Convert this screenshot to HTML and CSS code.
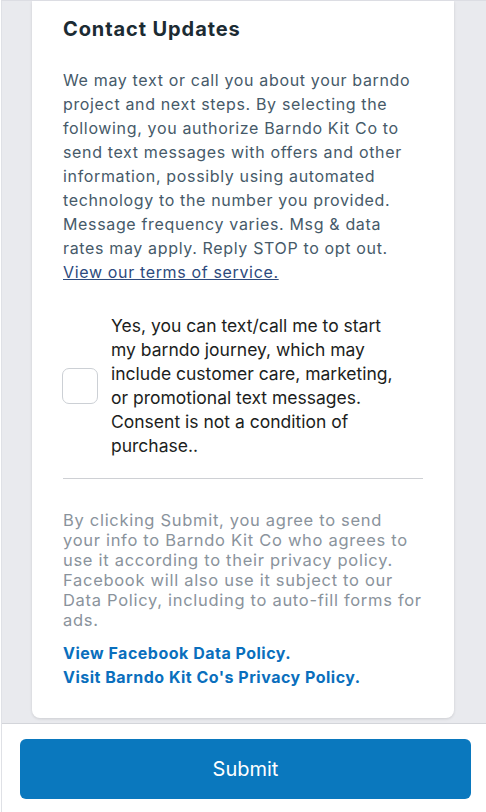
FILE: index.html
```html
<!DOCTYPE html>
<html lang="en">
<head>
<meta charset="utf-8">
<title>Contact Updates</title>
<link rel="stylesheet" href="styles.css">
</head>
<body>
<div class="page">
  <main class="scroll">
    <section class="card">
      <h2 class="title">Contact Updates</h2>
      <p class="intro">We may text or call you about your barndo project and next steps. By selecting the following, you authorize Barndo Kit Co to send text messages with offers and other information, possibly using automated technology to the number you provided. Message frequency varies. Msg &amp; data rates may apply. Reply STOP to opt out. <a class="terms" href="#">View our terms of service.</a></p>
      <label class="consent">
        <span class="box"></span>
        <span class="consent-text">Yes, you can text/call me to start my barndo journey, which may include customer care, marketing, or promotional text messages. Consent is not a condition of purchase..</span>
      </label>
      <hr class="divider">
      <p class="legal">By clicking Submit, you agree to send your info to Barndo Kit Co who agrees to use it according to their privacy policy. Facebook will also use it subject to our Data Policy, including to auto-fill forms for ads.</p>
      <div class="links">
        <a href="#">View Facebook Data Policy.</a>
        <a href="#">Visit Barndo Kit Co's Privacy Policy.</a>
      </div>
    </section>
  </main>
  <footer class="footer">
    <button class="submit" type="button">Submit</button>
  </footer>
</div>
</body>
</html>
```
FILE: styles.css
```css
html, body {
  margin: 0;
  padding: 0;
}
body {
  background: #ffffff;
  font-family: Inter, "Noto Sans", sans-serif;
  height: 812px;
  overflow: hidden;
}
.page {
  display: flex;
  flex-direction: column;
  height: 812px;
  margin-left: 1px;
  border-left: 1px solid #dfe1e6;
  border-top: 1px solid #dcdde3;
  box-sizing: border-box;
  background: #e9eaee;
}
.scroll {
  flex: 1;
  padding: 0 32px 0 30px;
  overflow: hidden;
}
.card {
  background: #ffffff;
  border-radius: 0 0 8px 8px;
  box-shadow: 0 1px 3px rgba(0, 0, 0, 0.12);
  padding: 15px 31px 0 31px;
  height: 717px;
  box-sizing: border-box;
}
.title {
  margin: 0;
  font-size: 20px;
  line-height: 26px;
  font-weight: 700;
  color: #1c2b33;
  letter-spacing: 0.9px;
}
.intro {
  margin: 26px 0 0;
  font-size: 16px;
  line-height: 24px;
  letter-spacing: 0.65px;
  color: #465a69;
}
.terms {
  text-decoration: underline;
  color: #2d4a7d;
}
.consent {
  display: flex;
  align-items: center;
  gap: 13px;
  margin-top: 30px;
}
.box {
  flex: none;
  width: 34px;
  height: 34px;
  margin-left: -1px;
  border: 1px solid #ccd0d5;
  border-radius: 7px;
  background: #fff;
}
.consent-text {
  padding-right: 18px;
  font-size: 17.5px;
  line-height: 24px;
  color: #1c1e21;
}
.divider {
  margin: 20px 0 0;
  border: 0;
  border-top: 1px solid #ced0d4;
}
.legal {
  margin: 31px 0 0;
  font-size: 16.5px;
  line-height: 20px;
  letter-spacing: 0.7px;
  color: #8a939c;
}
.links {
  display: flex;
  flex-direction: column;
  margin-top: 11px;
}
.links a {
  font-size: 16px;
  line-height: 24px;
  font-weight: 700;
  letter-spacing: 0.5px;
  color: #0a6fbd;
  text-decoration: none;
}
.footer {
  flex: none;
  background: #ffffff;
  border-top: 1px solid #d3d5da;
  padding: 15px 15px 13px 18px;
}
.submit {
  display: block;
  width: 100%;
  height: 60px;
  border: 0;
  border-radius: 6px;
  background: #0a78be;
  color: #ffffff;
  font-family: Inter, "Noto Sans", sans-serif;
  font-size: 20px;
  font-weight: 400;
}
```
